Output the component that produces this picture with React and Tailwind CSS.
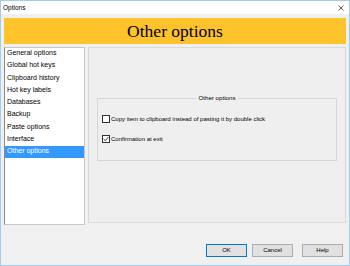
import React from 'react';

const pages = [
  'General options',
  'Global hot keys',
  'Clipboard history',
  'Hot key labels',
  'Databases',
  'Backup',
  'Paste options',
  'Interface',
  'Other options',
];

const CheckRow = ({ label, checked }) => (
  <div className="flex items-center h-[8px]">
    <div className="w-[8px] h-[8px] border border-[#333333] bg-white flex items-center justify-center">
      {checked && (
        <svg width="6" height="6" viewBox="0 0 6 6">
          <path d="M0.6 3 L2.3 4.7 L5.4 1" fill="none" stroke="#222" strokeWidth="0.9" />
        </svg>
      )}
    </div>
    <span className="ml-[1px] text-[6px] leading-[8px] text-black whitespace-nowrap">{label}</span>
  </div>
);

const Btn = ({ children, primary }) => (
  <button
    className={`w-[41px] h-[13px] bg-[#e1e1e1] border text-[6px] leading-[11px] text-black ${
      primary ? 'border-[#0078d7]' : 'border-[#adadad]'
    }`}
  >
    {children}
  </button>
);

export default function App() {
  return (
    <div
      className="w-[350px] h-[266px] border border-[#a3cdef] bg-[#f0f0f0] flex flex-col overflow-hidden"
      style={{ fontFamily: '"Liberation Sans", Arial, sans-serif' }}
    >
      {/* title bar */}
      <div className="h-[13px] bg-white flex items-center justify-between pl-[2px] pr-[5px] shrink-0">
        <span className="text-[6.5px] leading-[13px] text-black">Options</span>
        <svg width="6" height="6" viewBox="0 0 6 6">
          <path d="M0.5 0.5 L5.5 5.5 M5.5 0.5 L0.5 5.5" stroke="#333" strokeWidth="0.8" />
        </svg>
      </div>

      <div className="flex-1 flex flex-col px-[3px] pt-[4px]">
        {/* banner */}
        <div className="h-[26px] bg-[#fec22b] flex items-center justify-center">
          <span
            className="text-[17.5px] leading-[20px] text-black"
            style={{ fontFamily: '"Liberation Serif", "Times New Roman", serif' }}
          >
            Other options
          </span>
        </div>

        <div className="mt-[3px] flex gap-[3px] h-[178px]">
          {/* page list */}
          <div className="w-[81px] bg-white border border-[#c8c8c8] border-l-[#8a8a8a] pt-[0px]">
            {pages.map((p, i) => (
              <div
                key={p}
                className={`h-[12.25px] pl-[2px] text-[7px] leading-[9px] ${
                  i === pages.length - 1 ? 'bg-[#3399ff] text-white' : 'text-black'
                }`}
              >
                {p}
              </div>
            ))}
          </div>

          {/* page panel */}
          <div className="flex-1 h-[176px] border border-[#dadada] bg-[#efefef] px-[8px] pt-[47px]">
            <fieldset className="border border-[#d6d6d6] h-[66px] px-[4px]">
              <legend className="mx-auto px-[2px] text-[6.2px] leading-[6px] text-black">Other options</legend>
              <div className="pt-[14px] flex flex-col gap-[12px]">
                <CheckRow label="Copy item to clipboard instead of pasting it by double click" />
                <CheckRow label="Confirmation at exit" checked />
              </div>
            </fieldset>
          </div>
        </div>

        {/* buttons */}
        <div className="mt-[19px] flex justify-end pr-[3px]">
          <Btn primary>OK</Btn>
          <div className="w-[5px]" />
          <Btn>Cancel</Btn>
          <div className="w-[9px]" />
          <Btn>Help</Btn>
        </div>
      </div>
    </div>
  );
}
